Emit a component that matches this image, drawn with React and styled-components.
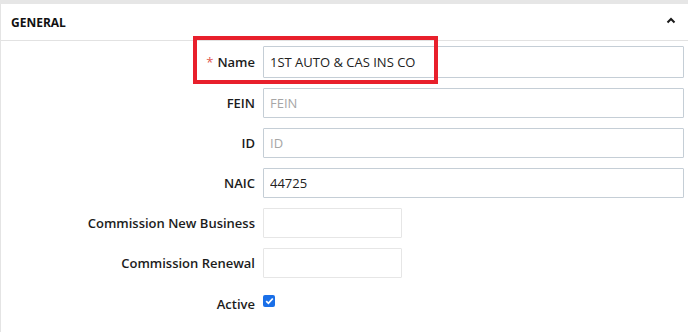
import styled, { createGlobalStyle } from 'styled-components';

const GlobalStyle = createGlobalStyle`
  html, body {
    margin: 0;
    padding: 0;
    background: #fff;
  }
  body {
    font-family: 'Open Sans', 'Liberation Sans', sans-serif;
    color: #222;
  }
`;

const fields = [
  { label: 'Name', value: '1ST AUTO & CAS INS CO', required: true, tall: true },
  { label: 'FEIN', placeholder: 'FEIN' },
  { label: 'ID', placeholder: 'ID' },
  { label: 'NAIC', value: '44725' },
  { label: 'Commission New Business', short: true },
  { label: 'Commission Renewal', short: true },
];

const ChevronUp = () => (
  <svg width="10" height="7" viewBox="0 0 10 7">
    <polyline points="1.5,5.5 5,2 8.5,5.5" fill="none" stroke="#1a1a1a" strokeWidth="2" />
  </svg>
);

const App = () => {
  return (
    <>
      <GlobalStyle />
      <Page>
        <TopBar />
        <Panel>
          <PanelHeader>
            <span>GENERAL</span>
            <ChevronUp />
          </PanelHeader>
          <Form>
            <Highlight />
            {fields.map((f) => (
              <Row key={f.label} $tall={f.tall}>
                <Label>
                  {f.required && <Star>*</Star>}
                  {f.label}
                </Label>
                <Input
                  $short={f.short}
                  $tall={f.tall}
                  defaultValue={f.value}
                  placeholder={f.placeholder}
                />
              </Row>
            ))}
            <Row $check>
              <Label>Active</Label>
              <Check>
                <svg width="9" height="8" viewBox="0 0 9 8">
                  <polyline points="1.2,4.2 3.4,6.3 7.8,1.5" fill="none" stroke="#fff" strokeWidth="1.8" />
                </svg>
              </Check>
            </Row>
          </Form>
        </Panel>
      </Page>
    </>
  );
};

export default App;

const Page = styled.div`
  width: 688px;
  height: 332px;
  overflow: hidden;
`;

const TopBar = styled.div`
  height: 4px;
  background: #e6e6e6;
`;

const Panel = styled.div`
  border-left: 1px solid #e4e4e4;
  height: 328px;
`;

const PanelHeader = styled.div`
  height: 36px;
  display: flex;
  align-items: center;
  justify-content: space-between;
  padding: 0 12px 0 10px;
  border-bottom: 1px solid #e2e2e2;
  font-size: 12px;
  font-weight: 700;
  color: #111;

  svg {
    margin-bottom: 3px;
  }
`;

const Form = styled.div`
  position: relative;
  display: flex;
  flex-direction: column;
  gap: 10px;
  padding: 5px 4px 0 0;
`;

const Highlight = styled.div`
  position: absolute;
  left: 192px;
  top: -5px;
  width: 237px;
  height: 40px;
  border: 4px solid #e8202c;
  pointer-events: none;
`;

const Row = styled.div`
  display: flex;
  align-items: center;
  gap: 8px;
  height: ${(p) => (p.$tall ? '32px' : '30px')};
  margin-top: ${(p) => (p.$check ? '4px' : '0')};
  height: ${(p) => (p.$check ? '24px' : p.$tall ? '32px' : '30px')};
`;

const Label = styled.label`
  flex: 0 0 254px;
  text-align: right;
  font-size: 13px;
  font-weight: 600;
  color: #1c1c1c;
`;

const Star = styled.span`
  color: #e0574f;
  font-weight: 400;
  margin-right: 4px;
`;

const Input = styled.input`
  box-sizing: border-box;
  height: 100%;
  ${(p) => (p.$short ? 'width: 139px; flex: 0 0 139px;' : 'flex: 1;')}
  border: 1px solid ${(p) => (p.$short ? '#e6e6e6' : '#c5ced6')};
  border-radius: 1px;
  padding: 0 6px;
  font-family: 'Open Sans', 'Liberation Sans', sans-serif;
  font-size: 13px;
  color: #222;
  outline: none;

  &::placeholder {
    color: #a6a6a6;
  }
`;

const Check = styled.span`
  display: inline-flex;
  align-items: center;
  justify-content: center;
  width: 12px;
  height: 12px;
  border-radius: 2px;
  background: #1a6fe8;
  margin-bottom: 6px;
`;
